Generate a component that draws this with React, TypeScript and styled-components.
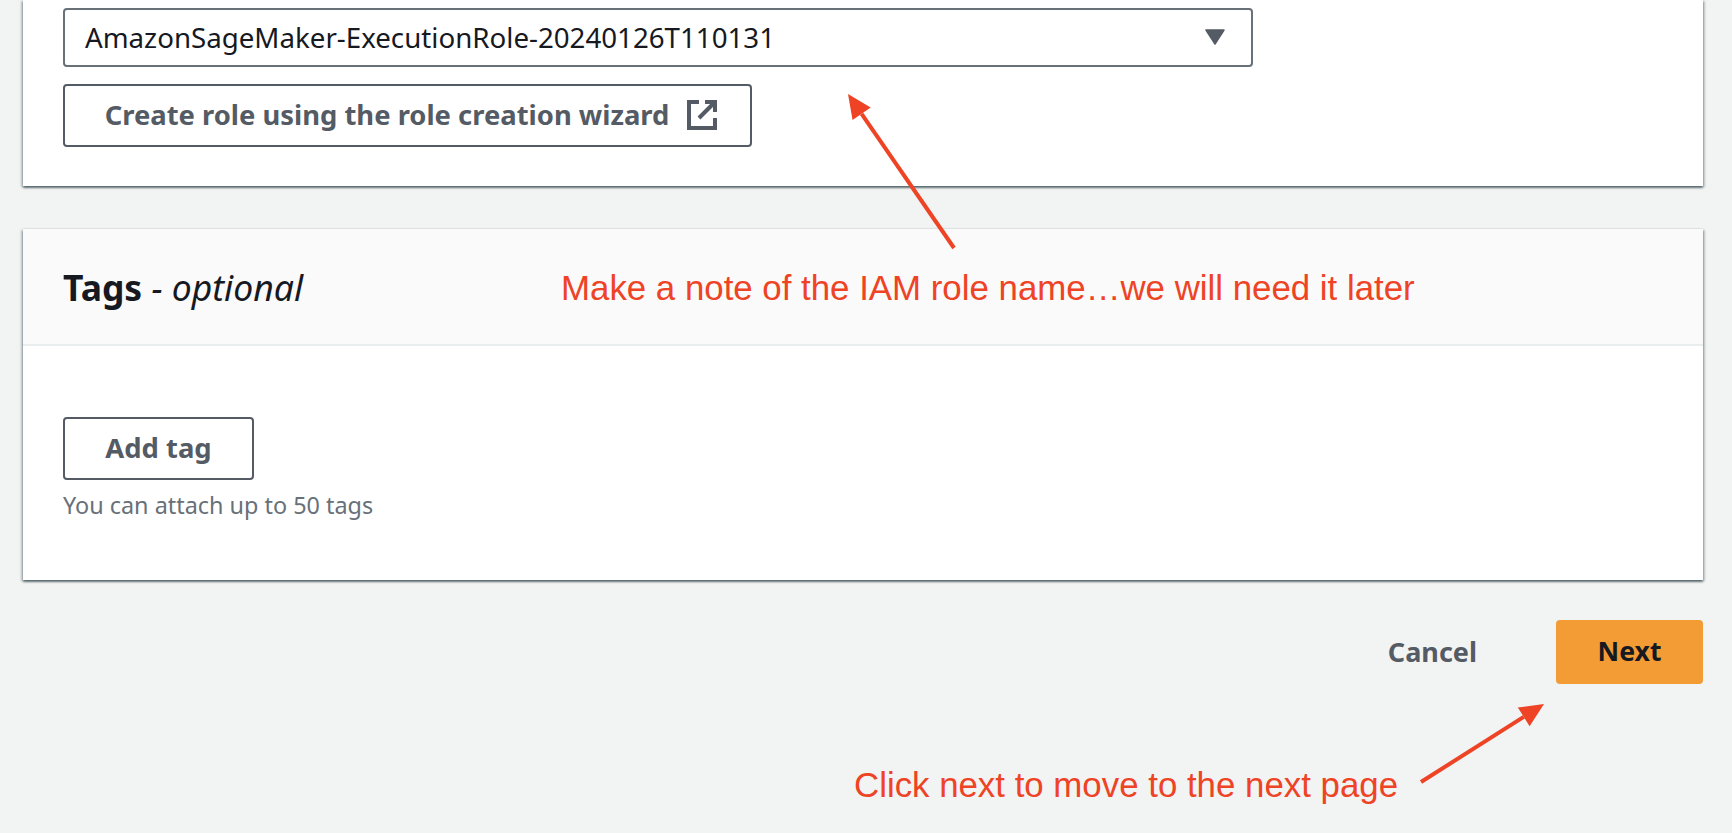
import React from "react";
import styled, { createGlobalStyle } from "styled-components";

const Global = createGlobalStyle`
  html, body { margin: 0; padding: 0; height: 100%; background: #f2f3f3; overflow: hidden; }
  #root { height: 100%; }
`;

const Page = styled.div`
  position: relative;
  width: 1732px;
  height: 833px;
  padding: 0 29px 0 23px;
  box-sizing: border-box;
  font-family: "Noto Sans", sans-serif;
  color: #16191f;
  overflow: hidden;
`;

const Card = styled.section`
  background: #fff;
  box-shadow: 0 2px 2px 0 rgba(0, 28, 36, 0.5), 2px 1px 2px 0 rgba(0, 28, 36, 0.2), -2px 1px 2px 0 rgba(0, 28, 36, 0.2), 0 -1px 1px 0 rgba(0, 28, 36, 0.05);
`;

const RoleCard = styled(Card)`
  height: 186px;
  padding: 8px 40px 0;
  box-sizing: border-box;
  display: flex;
  flex-direction: column;
  align-items: flex-start;
  gap: 17px;
`;

const SelectBox = styled.div`
  width: 1190px;
  height: 59px;
  box-sizing: border-box;
  border: 2px solid #687078;
  border-radius: 4px;
  padding: 0 26px 2px 20px;
  display: flex;
  align-items: center;
  justify-content: space-between;
  font-size: 27.7px;
  color: #16191f;
`;

const OutlineButton = styled.div<{ $w: number; $inset?: number }>`
  width: ${(p) => p.$w}px;
  height: 63px;
  box-sizing: border-box;
  border: 2px solid #545b64;
  border-radius: 4px;
  display: flex;
  align-items: center;
  justify-content: center;
  gap: 18px;
  padding: 0 0 2px ${(p) => p.$inset ?? 0}px;
  font-size: 27.4px;
  font-weight: 700;
  color: #545b64;
`;

const TagsCard = styled(Card)`
  margin-top: 43px;
  height: 351px;
`;

const TagsHeader = styled.header`
  height: 117px;
  box-sizing: border-box;
  background: #fafafa;
  border-bottom: 2px solid #eaeded;
  padding: 0 40px;
  display: flex;
  align-items: center;
  font-size: 35.5px;
`;

const TagsStrong = styled.strong`
  font-weight: 700;
`;

const Optional = styled.em`
  font-style: italic;
  font-weight: 400;
`;

const TagsBody = styled.div`
  padding: 71px 40px 0;
`;

const Hint = styled.div`
  margin-top: 9px;
  font-size: 23.4px;
  color: #687078;
`;

const Footer = styled.footer`
  margin-top: 40px;
  display: flex;
  justify-content: flex-end;
  align-items: center;
  gap: 79px;
`;

const Cancel = styled.span`
  padding-bottom: 2px;
  font-size: 27px;
  font-weight: 700;
  color: #545b64;
`;

const NextButton = styled.div`
  width: 147px;
  height: 64px;
  box-sizing: border-box;
  padding-bottom: 2px;
  border-radius: 4px;
  background: #f39c36;
  color: #16191f;
  display: flex;
  align-items: center;
  justify-content: center;
  font-size: 26.6px;
  font-weight: 700;
`;

const Note = styled.div<{ $x: number; $y: number }>`
  position: absolute;
  left: ${(p) => p.$x}px;
  top: ${(p) => p.$y}px;
  font-family: "Liberation Sans", Arial, sans-serif;
  font-size: 34.85px;
  line-height: 40px;
  color: #ee4325;
  white-space: nowrap;
`;

const Overlay = styled.svg`
  position: absolute;
  left: 0;
  top: 0;
  pointer-events: none;
`;

const Arrow = ({ x1, y1, x2, y2 }: { x1: number; y1: number; x2: number; y2: number }) => {
  const dx = x2 - x1;
  const dy = y2 - y1;
  const len = Math.hypot(dx, dy);
  const ux = dx / len;
  const uy = dy / len;
  const hl = 24;
  const hw = 11;
  const bx = x2 - ux * hl;
  const by = y2 - uy * hl;
  return (
    <>
      <line x1={x1} y1={y1} x2={bx} y2={by} stroke="#ee4325" strokeWidth={4} />
      <polygon
        points={`${x2},${y2} ${bx - uy * hw},${by + ux * hw} ${bx + uy * hw},${by - ux * hw}`}
        fill="#ee4325"
      />
    </>
  );
};

const ExternalIcon = () => (
  <svg width="30" height="30" viewBox="0 0 30 30" fill="none" stroke="#545b64" strokeWidth="4">
    <path d="M12 2H2v26h26V18" />
    <path d="M18 2h10v10" />
    <path d="M28 2 12 18" />
  </svg>
);

const Caret = () => (
  <svg width="20" height="16" viewBox="0 0 20 16">
    <path d="M1 1h18L10 15z" fill="#545b64" stroke="#545b64" strokeWidth="1.5" strokeLinejoin="round" />
  </svg>
);

export default function App() {
  return (
    <Page>
      <Global />
      <RoleCard>
        <SelectBox>
          <span>AmazonSageMaker-ExecutionRole-20240126T110131</span>
          <Caret />
        </SelectBox>
        <OutlineButton $w={689} $inset={7}>
          <span>Create role using the role creation wizard</span>
          <ExternalIcon />
        </OutlineButton>
      </RoleCard>
      <TagsCard>
        <TagsHeader>
          <TagsStrong>Tags</TagsStrong>
          <Optional>&nbsp;- optional</Optional>
        </TagsHeader>
        <TagsBody>
          <OutlineButton $w={191}>Add tag</OutlineButton>
          <Hint>You can attach up to 50 tags</Hint>
        </TagsBody>
      </TagsCard>
      <Footer>
        <Cancel>Cancel</Cancel>
        <NextButton>Next</NextButton>
      </Footer>
      <Note $x={561} $y={268}>Make a note of the IAM role name…we will need it later</Note>
      <Note $x={854} $y={765}>Click next to move to the next page</Note>
      <Overlay width="1732" height="833">
        <Arrow x1={954} y1={248} x2={848} y2={94} />
        <Arrow x1={1421} y1={782} x2={1544} y2={704} />
      </Overlay>
    </Page>
  );
}
